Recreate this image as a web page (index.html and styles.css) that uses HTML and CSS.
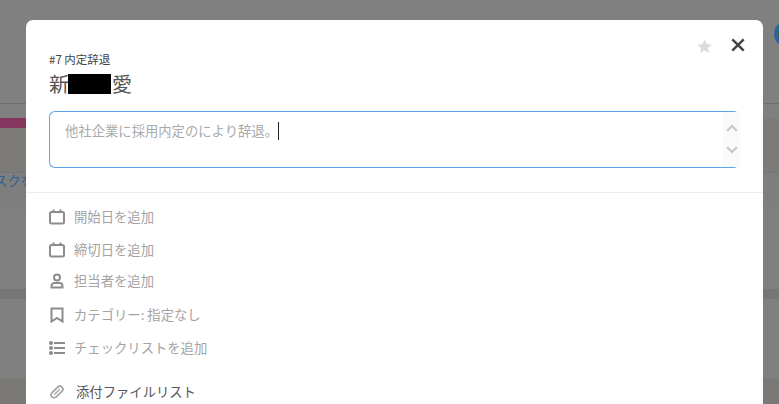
FILE: index.html
```html
<!DOCTYPE html>
<html lang="ja">
<head>
<meta charset="utf-8">
<title>内定辞退</title>
<link rel="stylesheet" href="styles.css">
</head>
<body>
<div class="page">
  <div class="bg-header"></div>
  <div class="bg-band"><div class="bg-pink"></div></div>
  <div class="bg-task"><span class="bg-link">スクを</span></div>
  <div class="bg-rows"></div>
  <div class="bg-rows second"></div>
  <div class="avatar"></div>
</div>
<div class="modal">
  <div class="top-actions">
    <svg class="star" viewBox="0 0 16 16" width="15" height="15"><path d="M8 .4l2.300 5 5.400.6-4 3.600 1.100 5.400L8 12.300 3.200 15l1.100-5.400-4-3.600 5.400-.6z" fill="#dcdcdc"/></svg>
    <svg class="close" viewBox="0 0 14 14" width="14" height="14"><path d="M1.300 1.300l11.400 11.400M12.700 1.300L1.300 12.700" stroke="#444" stroke-width="2.500" fill="none"/></svg>
  </div>
  <div class="head">
    <div class="label">#7 内定辞退</div>
    <h1 class="name"><span>新</span><span class="redact"></span><span>愛</span></h1>
    <div class="editor">
      <div class="editor-text">他社企業に採用内定のにより辞退。<span class="caret"></span></div>
      <div class="spin">
        <svg viewBox="0 0 12 8" width="12" height="8"><path d="M1 7l5-5 5 5" stroke="#c8c8c8" stroke-width="2.200" fill="none"/></svg>
        <svg viewBox="0 0 12 8" width="12" height="8"><path d="M1 1l5 5 5-5" stroke="#c8c8c8" stroke-width="2.200" fill="none"/></svg>
      </div>
    </div>
  </div>
  <ul class="list">
    <li class="row r1">
      <svg class="ic" viewBox="0 0 16 16" width="16" height="16"><rect x="1" y="3" width="14" height="11.500" rx="1.500" fill="none" stroke="#8c8c8c" stroke-width="2"/><path d="M4.500 0.500v3.500M11.500 0.500v3.500" stroke="#8c8c8c" stroke-width="2"/></svg>
      <span>開始日を追加</span>
    </li>
    <li class="row r2">
      <svg class="ic" viewBox="0 0 16 16" width="16" height="16"><rect x="1" y="3" width="14" height="11.500" rx="1.500" fill="none" stroke="#8c8c8c" stroke-width="2"/><path d="M4.500 0.500v3.500M11.500 0.500v3.500" stroke="#8c8c8c" stroke-width="2"/></svg>
      <span>締切日を追加</span>
    </li>
    <li class="row r3">
      <svg class="ic" viewBox="0 0 16 16" width="16" height="16"><circle cx="8" cy="4.500" r="3" fill="none" stroke="#8c8c8c" stroke-width="2"/><path d="M2.500 14.500v-1.500a3 3 0 0 1 3-3h5a3 3 0 0 1 3 3v1.500z" fill="none" stroke="#8c8c8c" stroke-width="2"/></svg>
      <span>担当者を追加</span>
    </li>
    <li class="row r4">
      <svg class="ic" viewBox="0 0 16 16" width="16" height="16"><path d="M2.500 1.500h11v13L8 11l-5.500 3.500z" fill="none" stroke="#8c8c8c" stroke-width="2"/></svg>
      <span>カテゴリー: 指定なし</span>
    </li>
    <li class="row r5">
      <svg class="ic" viewBox="0 0 16 16" width="16" height="16"><circle cx="2" cy="3" r="2" fill="#8c8c8c"/><circle cx="2" cy="8" r="2" fill="#8c8c8c"/><circle cx="2" cy="13" r="2" fill="#8c8c8c"/><path d="M5 3h11M5 8h11M5 13h11" stroke="#8c8c8c" stroke-width="2"/></svg>
      <span>チェックリストを追加</span>
    </li>
    <li class="row attach">
      <svg class="ic" viewBox="0 0 16 16" width="16" height="16"><g transform="rotate(-45 8 8)" fill="none" stroke="#a6a6a6"><rect x="1" y="5" width="14" height="6" rx="3" stroke-width="1.800"/><path d="M4 8h8" stroke-width="1.400"/></g></svg>
      <span>添付ファイルリスト</span>
    </li>
  </ul>
</div>
</body>
</html>
```
FILE: styles.css
```css
* { box-sizing: border-box; }
html, body { margin: 0; height: 100%; overflow: hidden; }
body {
  background: #808080;
  font-family: "Noto Sans CJK JP", "Noto Sans", sans-serif;
  position: relative;
}
.page { height: 404px; display: flex; flex-direction: column; }
.bg-header { height: 104px; border-bottom: 1px solid #6e6e6e; flex: none; }
.bg-band {
  height: 55px;
  margin-top: 14px;
  background: #7c7b78;
  border-bottom: 1px solid #757575;
  flex: none;
}
.bg-pink { height: 10px; width: 40px; background: #85365f; }
.bg-task { height: 36px; flex: none; background: #7e7e7e; }
.bg-link { font-size: 13.330px; line-height: 16px; color: #2d6190; display: block; margin-left: -6px; white-space: nowrap; }
.bg-rows { height: 10px; margin-top: 80px; background: #767674; flex: none; }
.bg-rows.second { margin-top: 79px; background: #7a7975; height: 27px; }
.avatar {
  position: absolute;
  left: 774px;
  top: 21px;
  width: 26px;
  height: 26px;
  border-radius: 50%;
  border: 4px solid #2b659a;
  background: #3a5a3f;
}
.modal {
  position: absolute;
  left: 26px;
  top: 20px;
  width: 737px;
  height: 400px;
  background: #fff;
  border-radius: 7px;
}
.top-actions {
  position: absolute;
  right: 18px;
  top: 18px;
  display: flex;
  align-items: flex-start;
  gap: 19px;
}
.star { margin-top: 1px; }
.head { padding: 31px 23px 0; height: 173px; border-bottom: 1px solid #eee; }
.label { font-size: 11.500px; line-height: 16px; color: #444; }
.name {
  margin: 6px 0 0;
  font-size: 20px;
  font-weight: 400;
  line-height: 22px;
  color: #555;
  display: flex;
  align-items: center;
  height: 22px;
}
.redact { width: 43px; height: 20px; background: #000; margin-left: -1px; margin-right: 1px; }
.editor {
  margin-top: 16px;
  height: 57px;
  width: 691px;
  border: 1px solid #5ba4e5;
  border-width: 1px 5px 1px 1px;
  border-right-color: transparent;
  border-radius: 6px;
  display: flex;
  position: relative;
}
.editor-text {
  flex: 1;
  padding: 9px 15px;
  font-size: 13.330px;
  line-height: 20px;
  color: #aaa;
  display: flex;
  align-items: flex-start;
}
.caret { width: 1px; height: 18px; background: #222; margin-top: 1px; flex: none; }
.spin {
  position: absolute;
  right: -5px;
  top: 0;
  bottom: 0;
  width: 17px;
  background: #fafafa;
  display: flex;
  flex-direction: column;
  align-items: center;
  gap: 14px;
  padding-top: 12px;
}
.list { list-style: none; margin: 0; padding: 0 0 0 23px; }
.row {
  display: flex;
  align-items: center;
  gap: 9px;
  height: 20px;
  font-size: 13.330px;
  line-height: 20px;
  color: #a3a3a3;
}
.r1 { margin-top: 14px; }
.r2 { margin-top: 13px; }
.r3 { margin-top: 11px; }
.r4 { margin-top: 14px; }
.r5 { margin-top: 13px; }
.attach { margin-top: 24px; color: #555; gap: 11px; }
```
